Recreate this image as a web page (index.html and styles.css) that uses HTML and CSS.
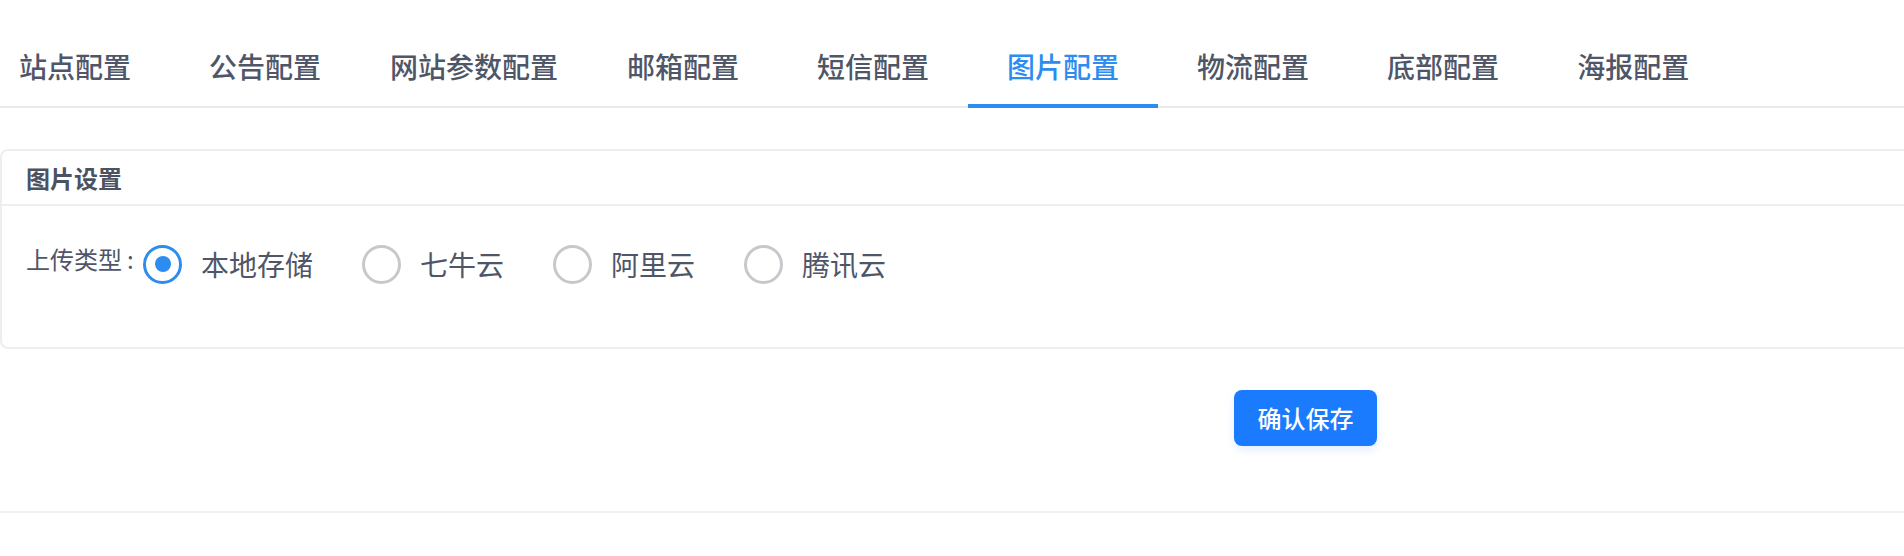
FILE: index.html
```html
<!DOCTYPE html>
<html lang="zh-CN">
<head>
<meta charset="utf-8">
<title>图片配置</title>
<link rel="stylesheet" href="styles.css">
</head>
<body>
<div class="page">
  <nav class="tabs">
    <a class="tab">站点配置</a>
    <a class="tab">公告配置</a>
    <a class="tab tab-wide">网站参数配置</a>
    <a class="tab">邮箱配置</a>
    <a class="tab">短信配置</a>
    <a class="tab active">图片配置</a>
    <a class="tab">物流配置</a>
    <a class="tab">底部配置</a>
    <a class="tab">海报配置</a>
  </nav>
  <div class="pane">
    <section class="card">
      <header class="card-head">图片设置</header>
      <div class="card-body">
        <div class="form-item">
          <label class="form-label">上传类型<span class="colon">:</span></label>
          <div class="radio-group">
            <label class="radio checked"><span class="radio-inner"></span><span class="radio-text">本地存储</span></label>
            <label class="radio"><span class="radio-inner"></span><span class="radio-text">七牛云</span></label>
            <label class="radio"><span class="radio-inner"></span><span class="radio-text">阿里云</span></label>
            <label class="radio"><span class="radio-inner"></span><span class="radio-text">腾讯云</span></label>
          </div>
        </div>
      </div>
    </section>
    <div class="actions">
      <button class="btn-primary" type="button">确认保存</button>
    </div>
  </div>
</div>
</body>
</html>
```

FILE: styles.css
```css
* { box-sizing: border-box; }

html, body {
  margin: 0;
  padding: 0;
  background: #ffffff;
  overflow: hidden;
}

body {
  font-family: "Noto Sans CJK SC", "Noto Sans", sans-serif;
  color: #4e5668;
}

.page {
  width: 100%;
}

.tabs {
  display: flex;
  margin-top: 30px;
  padding-left: 19px;
  border-bottom: 2px solid #e8eaec;
}

.tab {
  position: relative;
  font-size: 28px;
  line-height: 40px;
  padding: 16px 39px 20px;
  color: #4e5668;
  font-weight: 500;
  white-space: nowrap;
  cursor: pointer;
}

.tab:first-child {
  padding-left: 0;
}

.tab-wide {
  padding-left: 30px;
  padding-right: 30px;
}

.tab.active {
  color: #2d8cf0;
}

.tab.active::after {
  content: "";
  position: absolute;
  left: 0;
  right: 0;
  bottom: -2px;
  height: 4px;
  background: #2d8cf0;
}

.pane {
  padding-top: 41px;
  border-bottom: 2px solid #f1f2f5;
  box-shadow: 0 2px 4px rgba(0, 0, 0, 0.02);
}

.card {
  width: calc(100% + 40px);
  border: 2px solid #eceef1;
  border-radius: 8px;
  background: #fff;
}

.card-head {
  height: 55px;
  padding: 0 24px;
  font-size: 24px;
  line-height: 53px;
  font-weight: bold;
  color: #4b5262;
  border-bottom: 2px solid #eceef1;
}

.card-body {
  padding: 32px 24px;
}

.form-item {
  display: flex;
  margin-bottom: 25px;
}

.form-label {
  width: 117px;
  flex: none;
  font-size: 24px;
  line-height: 42px;
  color: #4e5668;
}

.colon {
  margin-left: 5px;
}

.radio-group {
  display: flex;
  align-items: center;
  height: 52px;
}

.radio {
  display: flex;
  align-items: center;
  margin-right: 49px;
  cursor: pointer;
}

.radio-inner {
  position: relative;
  width: 39px;
  height: 39px;
  border: 3px solid #c6c8cc;
  border-radius: 50%;
  background: #fff;
  flex: none;
}

.radio.checked .radio-inner {
  border-color: #2d8cf0;
}

.radio.checked .radio-inner::after {
  content: "";
  position: absolute;
  left: 50%;
  top: 50%;
  width: 16px;
  height: 16px;
  margin: -8px 0 0 -8px;
  border-radius: 50%;
  background: #2d8cf0;
}

.radio-text {
  margin-left: 19px;
  font-size: 28px;
  line-height: 40px;
  color: #4e5668;
}

.actions {
  padding: 41px 0 65px 1234px;
}

.btn-primary {
  display: block;
  width: 143px;
  height: 56px;
  padding: 0;
  border: none;
  border-radius: 8px;
  background: #1a7bff;
  color: #ffffff;
  font-family: "Noto Sans CJK SC", "Noto Sans", sans-serif;
  font-size: 24px;
  font-weight: 500;
  line-height: 56px;
  box-shadow: 0 4px 8px rgba(26, 123, 255, 0.12);
  cursor: pointer;
}
```
